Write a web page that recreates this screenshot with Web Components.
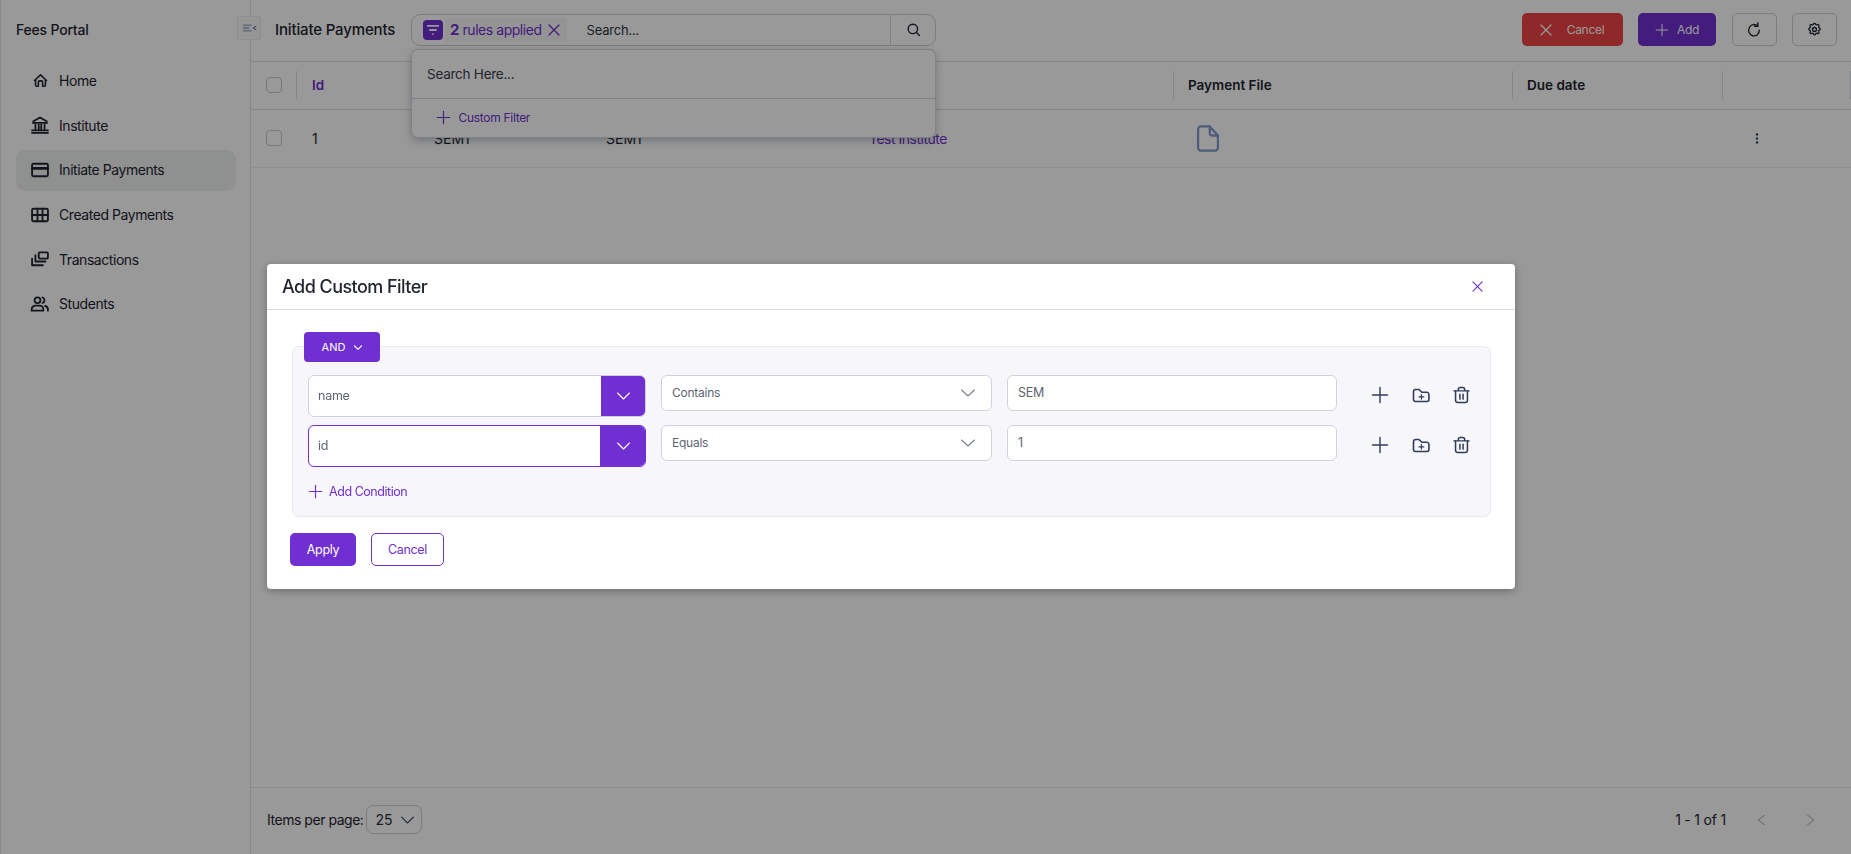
<!DOCTYPE html>
<html lang="en">
<head>
<meta charset="utf-8">
<title>Fees Portal</title>
<style>
html,body{margin:0;padding:0;height:100%;overflow:hidden;background:#fff;font-family:Inter,"Liberation Sans",sans-serif;color:#1f2430}
fp-app{height:854px}
</style>
</head>
<body>
<fp-app></fp-app>
<script>
const ICONS = {
  home:'<path d="M5 12H3.500L12 4l8.500 8H19"/><path d="M5 12v6.500A1.500 1.500 0 0 0 6.500 20H9v-6a1.500 1.500 0 0 1 1.500-1.500h3A1.500 1.500 0 0 1 15 14v6h2.500a1.500 1.500 0 0 0 1.500-1.500V12"/>',
  bank:'<path d="M2.500 21.500h19M2.500 18.500h19M3.500 9.500h17M4 7.500 12 3l8 4.500M6.500 11.500v5M10.500 11.500v5M13.500 11.500v5M17.500 11.500v5"/>',
  card:'<rect x="2.500" y="4.500" width="19" height="15" rx="1.500"/><path d="M3 10h18" stroke-width="3.400"/>',
  grid:'<rect x="2.500" y="4.500" width="19" height="15" rx="1.500"/><path d="M2.500 12h19M9 4.500v15M15 4.500v15"/>',
  stack:'<rect x="10.500" y="4" width="11" height="7.500" rx="1.200"/><path d="M6.500 7.500V15h12M2.500 11.500V19.500h13"/>',
  users:'<circle cx="9" cy="7.500" r="3.500"/><path d="M2 20v-1.500A4.500 4.500 0 0 1 6.500 14h5a4.500 4.500 0 0 1 4.500 4.500V20z"/><path d="M15 4.200a3.500 3.500 0 0 1 0 6.600M18 14.200a4.500 4.500 0 0 1 3.500 4.300V20"/>',
  collapse:'<path d="M2 5h13M2 12h9M2 19h13M22 8l-4 4 4 4"/>',
  filter:'<path d="M5 6.500h14M8 12h8"/><circle cx="12" cy="17.500" r="1.200" fill="currentColor" stroke="none"/>',
  x:'<path d="M2 2l20 20M22 2 2 22"/>',
  plus:'<path d="M12 2v20M2 12h20"/>',
  search:'<circle cx="11" cy="11" r="7.500"/><path d="m16.500 16.500 5 5"/>',
  refresh:'<path d="M17.500 7.200A8 8 0 1 0 20 13"/><path d="M17.800 2.500v5h-5"/>',
  gear:'<path d="M10.300 3.300a1.800 1.800 0 0 1 3.400 0 1.800 1.800 0 0 0 2.700 1.100 1.800 1.800 0 0 1 2.500 2.500 1.800 1.800 0 0 0 1.100 2.700 1.800 1.800 0 0 1 0 3.400 1.800 1.800 0 0 0-1.100 2.700 1.800 1.800 0 0 1-2.500 2.500 1.800 1.800 0 0 0-2.700 1.100 1.800 1.800 0 0 1-3.400 0 1.800 1.800 0 0 0-2.700-1.100 1.800 1.800 0 0 1-2.500-2.500 1.800 1.800 0 0 0-1.100-2.700 1.800 1.800 0 0 1 0-3.400 1.800 1.800 0 0 0 1.100-2.700 1.800 1.800 0 0 1 2.500-2.500 1.800 1.800 0 0 0 2.700-1.100z"/><circle cx="12" cy="12" r="3.200"/>',
  file:'<path d="M6 2h7.500l7 7.500v10A2.500 2.500 0 0 1 18 22H6a2.500 2.500 0 0 1-2.500-2.500v-15A2.500 2.500 0 0 1 6 2z"/><path d="M13.500 2v5.500a2 2 0 0 0 2 2h5"/>',
  kebab:'<circle cx="12" cy="4.500" r="2.300" fill="currentColor" stroke="none"/><circle cx="12" cy="12" r="2.300" fill="currentColor" stroke="none"/><circle cx="12" cy="19.500" r="2.300" fill="currentColor" stroke="none"/>',
  chevd:'<path d="m1 3 11 18L23 3"/>',
  chevl:'<path d="m15 4-8 8 8 8"/>',
  chevr:'<path d="m9 4 8 8-8 8"/>',
  folder:'<path d="M3 7a2.500 2.500 0 0 1 2.500-2.500H9.500L13 8h6a2.500 2.500 0 0 1 2.500 2.500V17a2.500 2.500 0 0 1-2.500 2.500H5.500A2.500 2.500 0 0 1 3 17z"/><path d="M12.500 11v5.500M9.700 13.800h5.600" stroke-width="1.500"/>',
  trash:'<path d="M2.500 6.500h19M8 6V4.500A2.500 2.500 0 0 1 10.500 2h3A2.500 2.500 0 0 1 16 4.500V6"/><path d="M4.500 6.500V19A3 3 0 0 0 7.500 22h9A3 3 0 0 0 19.500 19V6.500"/><path d="M10 11v6.500M14 11v6.500"/>'
};
class FpIcon extends HTMLElement{
  connectedCallback(){
    if(this.shadowRoot) return;
    const s=this.getAttribute('size')||'16', h=this.getAttribute('h')||s, sw=this.getAttribute('sw')||'2';
    this.attachShadow({mode:'open'}).innerHTML=`<style>:host{display:inline-flex;flex:none;line-height:0}</style>
    <svg width="${s}" height="${h}" viewBox="0 0 24 24" preserveAspectRatio="none" fill="none" stroke="currentColor" stroke-width="${sw}" stroke-linecap="round" stroke-linejoin="round">${ICONS[this.getAttribute('name')]||''}</svg>`;
  }
}
customElements.define('fp-icon',FpIcon);

class FpNavItem extends HTMLElement{
  connectedCallback(){
    if(this.shadowRoot) return;
    const sz=this.getAttribute('isize')||'20';
    this.attachShadow({mode:'open'}).innerHTML=`<style>
    :host{display:flex;align-items:center;height:41px;box-sizing:border-box;padding:0 0 1px 14px;gap:9px;border-radius:9px;font-size:14px;letter-spacing:-.44px;color:#1f2430}
    :host([active]){background:#edf2ef}
    .w{width:20px;height:20px;display:flex;align-items:center;justify-content:center}
    </style><span class="w"><fp-icon name="${this.getAttribute('icon')}" size="${sz}" sw="2.200"></fp-icon></span><slot></slot>`;
  }
}
customElements.define('fp-nav-item',FpNavItem);

class FpSidebar extends HTMLElement{
  connectedCallback(){
    this.attachShadow({mode:'open'}).innerHTML=`<style>
    :host{display:block;position:relative;flex:0 0 251px;box-sizing:border-box;border-left:1px solid #dfe2e8;border-right:1px solid #dfe2e8;height:100%;background:#fff}
    .brand{height:60px;box-sizing:border-box;padding:0 0 1px 15px;display:flex;align-items:center;font-size:14px;letter-spacing:-.2px;font-weight:500;color:#1f2430}
    nav{display:flex;flex-direction:column;gap:3.600px;padding:.8px 14px 0 15px}
    .toggle{position:absolute;left:236px;top:16px;width:24px;height:24px;box-sizing:border-box;border:1px solid #e9ebef;border-radius:3px;background:#fafbfc;color:#5a6aa0;display:flex;align-items:center;justify-content:center}
    </style>
    <div class="brand">Fees Portal</div>
    <nav>
      <fp-nav-item icon="home" isize="17">Home</fp-nav-item>
      <fp-nav-item icon="bank">Institute</fp-nav-item>
      <fp-nav-item icon="card">Initiate Payments</fp-nav-item>
      <fp-nav-item icon="grid">Created Payments</fp-nav-item>
      <fp-nav-item icon="stack">Transactions</fp-nav-item>
      <fp-nav-item icon="users">Students</fp-nav-item>
    </nav>
    <div class="toggle"><fp-icon name="collapse" size="15" h="10" sw="2"></fp-icon></div>`;
    this.shadowRoot.querySelectorAll('fp-nav-item')[2].setAttribute('active','');
  }
}
customElements.define('fp-sidebar',FpSidebar);

class FpSearch extends HTMLElement{
  connectedCallback(){
    this.attachShadow({mode:'open'}).innerHTML=`<style>
    :host{display:block;position:relative;flex:0 0 525px;width:525px;height:32px;box-sizing:border-box;border:1px solid #cfd2d9;border-radius:9px;background:#fff;font-size:13px;letter-spacing:-.2px;color:#2f3542}
    .bar{display:flex;align-items:center;height:100%}
    .badge{margin-left:11px;width:20px;height:20px;border-radius:4px;background:#702fd0;color:#fff;display:flex;align-items:center;justify-content:center}
    .chip{display:flex;align-items:center;height:24px;padding:0 7px 0 5px;background:#f7f7f8;font-size:14px;letter-spacing:-.45px;color:#702fd0;gap:6px;margin-left:2px}
    .chip b{font-weight:700;font-size:15px}
    .ph{margin-left:20px;flex:1}
    .go{width:45px;height:100%;border-left:1px solid #d6d8de;display:flex;align-items:center;justify-content:center;color:#1f2430;box-sizing:border-box}
    .menu{position:absolute;left:-1px;top:34px;width:525px;height:89px;box-sizing:border-box;border:1px solid #d4d7de;border-radius:7px;background:#fff;box-shadow:0 3px 8px rgba(30,40,70,.28);z-index:5}
    .find{height:49px;box-sizing:border-box;padding-left:15px;display:flex;align-items:center;font-size:13.500px;letter-spacing:-.25px;border-bottom:1px solid #d9dbe1;color:#3a404d}
    .cf{height:38px;padding-left:24px;display:flex;align-items:center;gap:7.500px;font-size:12px;letter-spacing:-.3px;color:#702fd0}
    </style>
    <div class="bar">
      <span class="badge"><fp-icon name="filter" size="18" sw="2.400"></fp-icon></span>
      <span class="chip"><span><b>2</b> rules applied</span><fp-icon name="x" size="12" sw="2.600"></fp-icon></span>
      <span class="ph">Search...</span>
      <span class="go"><fp-icon name="search" size="15" sw="2.200"></fp-icon></span>
    </div>
    <div class="menu">
      <div class="find">Search Here...</div>
      <div class="cf"><fp-icon name="plus" size="15" sw="1.800"></fp-icon><span>Custom Filter</span></div>
    </div>`;
  }
}
customElements.define('fp-search',FpSearch);

class FpButton extends HTMLElement{
  connectedCallback(){
    if(this.shadowRoot) return;
    const ic=this.getAttribute('icon');
    this.attachShadow({mode:'open'}).innerHTML=`<style>
    :host{display:inline-flex;align-items:center;justify-content:center;box-sizing:border-box;height:33px;border-radius:5px;font-size:12px;letter-spacing:-.3px;gap:var(--g,8px);color:#fff;border:1px solid transparent}
    :host([kind=danger]){background:#ef4444;width:101px;--g:15px}
    :host([kind=primary]){background:#702fd0;width:78px}
    :host([kind=ghost]){border-color:#cfd2d9;color:#1f2430;background:#fff;width:45px}
    </style>${ic?`<fp-icon name="${ic}" size="${this.getAttribute('is')||14}" h="${this.getAttribute('ih')||this.getAttribute('is')||14}" sw="${this.getAttribute('sw')||2}"></fp-icon>`:''}<slot></slot>`;
  }
}
customElements.define('fp-button',FpButton);

class FpHeader extends HTMLElement{
  connectedCallback(){
    this.attachShadow({mode:'open'}).innerHTML=`<style>
    :host{display:flex;align-items:center;height:62px;flex:none;box-sizing:border-box;border-bottom:1px solid #dcdfe4;padding:0 14px 2px 24px;background:#fff}
    .t{flex:0 0 136px;font-size:15px;letter-spacing:-.15px;font-weight:500;color:#1f2430;white-space:nowrap}
    .acts{margin-left:auto;display:flex;gap:15.500px}
    </style>
    <div class="t">Initiate Payments</div>
    <fp-search></fp-search>
    <div class="acts">
      <fp-button kind="danger" icon="x" is="12" sw="2.400"><span>Cancel</span></fp-button>
      <fp-button kind="primary" icon="plus" is="14" sw="1.800"><span>Add</span></fp-button>
      <fp-button kind="ghost" icon="refresh" is="16" ih="17" sw="2"></fp-button>
      <fp-button kind="ghost" icon="gear" is="15" sw="2.100"></fp-button>
    </div>`;
  }
}
customElements.define('fp-header',FpHeader);

class FpCheck extends HTMLElement{
  connectedCallback(){
    this.attachShadow({mode:'open'}).innerHTML=`<style>:host{display:block;width:16px;height:16px;box-sizing:border-box;border:1px solid #c5c8cf;border-radius:4px;background:#fff}</style>`;
  }
}
customElements.define('fp-check',FpCheck);

class FpTable extends HTMLElement{
  connectedCallback(){
    this.attachShadow({mode:'open'}).innerHTML=`<style>
    :host{display:block;flex:1;min-height:0;background:#fff;font-size:14px;color:#1f2430}
    .r{display:grid;grid-template-columns:45px 122px 172px 263px 320px 339px 210px 1fr;box-sizing:border-box}
    .h{height:48px;border-bottom:1px solid #dcdfe4;font-weight:600;font-size:13.500px;align-items:center;padding-bottom:1px}
    .d{height:58px;border-bottom:1px solid #eceef1;align-items:center;padding-bottom:1px}
    .c{padding-left:15px;display:flex;align-items:center;min-width:0}
    .h .s{height:28px;box-sizing:border-box;border-left:1px solid #dcdfe4;padding-left:14px;display:flex;align-items:center}
    .h .e{border-right:1px solid #dcdfe4}
    .h .id{color:#702fd0;padding-left:15px}
    .lnk{color:#702fd0;letter-spacing:-.5px}
    .file{padding-left:21px;color:#8398cc}
    .kb{padding-left:29px;color:#2f3d58}
    .n{padding-left:16px}
    </style>
    <div class="r h">
      <div class="c"><fp-check></fp-check></div>
      <div class="s id">Id</div><div></div><div></div><div></div>
      <div class="s">Payment File</div>
      <div class="s">Due date</div>
      <div class="s e"></div>
    </div>
    <div class="r d">
      <div class="c"><fp-check></fp-check></div>
      <div class="c n">1</div>
      <div class="c n">SEM1</div>
      <div class="c n">SEM1</div>
      <div class="c n lnk">Test Institute</div>
      <div class="c file"><fp-icon name="file" size="28" h="29" sw="1.900"></fp-icon></div>
      <div></div>
      <div class="c kb"><fp-icon name="kebab" size="12" h="13" sw="2"></fp-icon></div>
    </div>`;
  }
}
customElements.define('fp-table',FpTable);

class FpFooter extends HTMLElement{
  connectedCallback(){
    this.attachShadow({mode:'open'}).innerHTML=`<style>
    :host{display:flex;align-items:flex-start;flex:none;height:67px;box-sizing:border-box;border-top:1px solid #e9ebee;padding:17px 0 0 16px;background:#fff;font-size:14px;color:#1f2430}
    .in{display:flex;align-items:center;height:29px}
    .lb{letter-spacing:-.47px}
    .sel{margin-left:3px;width:56px;height:29px;box-sizing:border-box;border:1px solid #cfd2d9;border-radius:7px;display:flex;align-items:center;padding-left:8px;gap:9px;color:#2a303c}
    .sel fp-icon{color:#2f3d58}
    .pg{margin-left:auto;padding-right:32px}
    .pg .ct{margin-right:27px;letter-spacing:-.2px}
    .pg fp-icon{color:#c3c6cb}
    .pg fp-icon+fp-icon{margin-left:30px}
    </style>
    <div class="in"><span class="lb">Items per page:</span><span class="sel"><span>25</span><fp-icon name="chevd" size="13" h="8" sw="2.200"></fp-icon></span></div>
    <div class="in pg"><span class="ct">1 - 1 of 1</span><fp-icon name="chevl" size="18" h="14" sw="1.900"></fp-icon><fp-icon name="chevr" size="18" h="14" sw="1.900"></fp-icon></div>`;
  }
}
customElements.define('fp-footer',FpFooter);

class FpFilterRow extends HTMLElement{
  connectedCallback(){
    const foc=this.hasAttribute('focus');
    this.attachShadow({mode:'open'}).innerHTML=`<style>
    :host{display:flex;align-items:flex-start;gap:15px;height:42px;font-size:12.500px;letter-spacing:-.25px;color:#5d6573}
    .f{flex:0 0 338px;height:42px;box-sizing:border-box;display:flex;border:1px solid ${foc?'#702fd0':'#d0d3db'};border-radius:6px;background:#fff;overflow:hidden}
    .f span{flex:1;padding:0 0 1px 9px;display:flex;align-items:center}
    .f i{flex:0 0 ${foc?46:45}px;margin:-1px;background:#702fd0;color:#fff;display:flex;align-items:center;justify-content:center}
    .b{height:36px;box-sizing:border-box;border:1px solid #d0d3db;border-radius:6px;background:#fff;display:flex;align-items:center;padding:0 0 1px 10px}
    .s{flex:0 0 331px;position:relative;justify-content:space-between;padding-right:16px;color:#5d6573;font-size:12px}
    .s fp-icon{color:#6b7280}
    .v{flex:0 0 330px}
    .a{display:flex;align-items:center;height:40px;color:#2f3d58;margin-left:19px}
    .a fp-icon:nth-child(2){margin-left:22px}
    .a fp-icon:nth-child(3){margin-left:20.500px}
    </style>
    <div class="f"><span>${this.getAttribute('field')}</span><i><fp-icon name="chevd" size="13" h="8" sw="2.800"></fp-icon></i></div>
    <div class="b s"><span>${this.getAttribute('op')}</span><fp-icon name="chevd" size="14" h="8" sw="2.200"></fp-icon></div>
    <div class="b v"><span>${this.getAttribute('value')}</span></div>
    <div class="a"><fp-icon name="plus" size="18" sw="1.900"></fp-icon><fp-icon name="folder" size="20" h="19" sw="1.900"></fp-icon><fp-icon name="trash" size="19" h="18" sw="1.900"></fp-icon></div>`;
  }
}
customElements.define('fp-filter-row',FpFilterRow);

class FpDialog extends HTMLElement{
  connectedCallback(){
    this.attachShadow({mode:'open'}).innerHTML=`<style>
    :host{position:fixed;inset:0;z-index:20;display:flex;align-items:flex-start;padding:264px 0 0 267px;box-sizing:border-box;background:rgba(0,0,0,.4);backdrop-filter:blur(.5px)}
    .m{width:1248px;height:325px;background:#fff;border-radius:4px;box-shadow:0 2px 8px rgba(0,0,0,.3);display:flex;flex-direction:column}
    .hd{height:46px;box-sizing:border-box;flex:none;border-bottom:1px solid #d8dce2;display:flex;align-items:center;padding:0 32px 1px 15px;justify-content:space-between;font-size:18px;letter-spacing:-.55px;font-weight:500;color:#22262f}
    .hd fp-icon{color:#702fd0}
    .g{position:relative;margin:36px 24px 0 25px;height:171px;box-sizing:border-box;background:#f6f6fb;border:1px solid #e9eaf1;border-radius:7px;padding:28px 0 0 15px;display:flex;flex-direction:column;gap:8px}
    .and{position:absolute;left:11px;top:-15px;width:76px;height:30px;border-radius:4px;background:#702fd0;color:#fff;font-size:11px;display:flex;align-items:center;justify-content:center;gap:9px}
    .add{margin-top:7px;display:flex;align-items:center;gap:6px;font-size:12.500px;letter-spacing:-.45px;color:#702fd0;height:18px}
    .ft{margin:16px 0 0 23px;display:flex;gap:15px}
    .bt{height:33px;box-sizing:border-box;border-radius:5px;display:flex;align-items:center;justify-content:center;font-size:12.500px;letter-spacing:-.3px}
    .ap{width:66px;background:#702fd0;color:#fff}
    .cn{width:73px;border:1px solid #702fd0;color:#702fd0;background:#fff}
    </style>
    <div class="m">
      <div class="hd"><span>Add Custom Filter</span><fp-icon name="x" size="11" sw="2.400"></fp-icon></div>
      <div class="g">
        <div class="and"><span>AND</span><fp-icon name="chevd" size="8" h="5" sw="4.500"></fp-icon></div>
        <fp-filter-row field="name" op="Contains" value="SEM"></fp-filter-row>
        <fp-filter-row focus field="id" op="Equals" value="1"></fp-filter-row>
        <div class="add"><fp-icon name="plus" size="15" sw="1.800"></fp-icon><span>Add Condition</span></div>
      </div>
      <div class="ft"><div class="bt ap">Apply</div><div class="bt cn">Cancel</div></div>
    </div>`;
  }
}
customElements.define('fp-dialog',FpDialog);

class FpApp extends HTMLElement{
  connectedCallback(){
    this.attachShadow({mode:'open'}).innerHTML=`<style>
    :host{display:flex;width:100%;background:#fff}
    main{flex:1;min-width:0;display:flex;flex-direction:column;height:854px}
    </style>
    <fp-sidebar></fp-sidebar>
    <main><fp-header></fp-header><fp-table></fp-table><fp-footer></fp-footer></main>
    <fp-dialog></fp-dialog>`;
  }
}
customElements.define('fp-app',FpApp);
</script>
</body>
</html>
